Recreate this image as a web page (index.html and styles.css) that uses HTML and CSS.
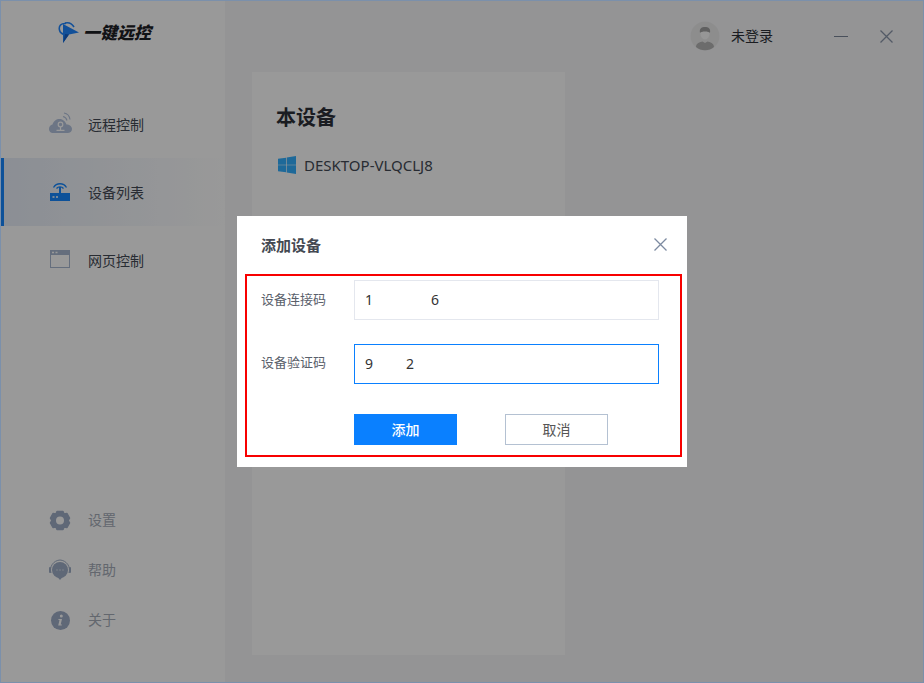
FILE: index.html
```html
<!DOCTYPE html>
<html lang="zh-CN">
<head>
  <meta charset="UTF-8" />
  <meta name="viewport" content="width=device-width, initial-scale=1.0"/>
  <title>一键远控</title>
  <link rel="stylesheet" href="styles.css">
</head>
<body>
  <div class="window">
    <aside class="sidebar">
      <div class="logo">
        <svg width="24" height="24" viewBox="0 0 24 24">
          <path d="M5 3 L21 11.500 L11 13.500 L5 22 Z" fill="#1f86ff"/>
          <path d="M11 13.500 L5 22 L7 13 Z" fill="#1560c8"/>
          <path d="M8 2.500 C3 2 0.500 5 1.500 9 C2 11.500 4 13 6.500 13.500" fill="none" stroke="#1f86ff" stroke-width="1.600"/>
          <path d="M7 2 C11 1 14 2.500 16 6" fill="none" stroke="#1f86ff" stroke-width="1.600"/>
        </svg>
        <span class="logo-text">一键远控</span>
      </div>

      <nav class="nav">
        <a class="nav-item">
          <svg class="nav-icon" width="24" height="24" viewBox="0 0 24 24">
            <path d="M5 21 C2 21 1 18.500 1 17 C1 14.500 2.500 13 4.500 12.500 C5.500 9 8.500 7 11.500 7 C15 7 17.500 9.500 18.500 12.500 C21.500 12.500 24 14.500 24 17 C24 19.500 22 21 19.500 21 Z" fill="#b4c3de"/>
            <circle cx="12.500" cy="12.500" r="2.300" fill="none" stroke="#fff" stroke-width="1.200"/>
            <path d="M12.500 15 V18 M8.500 18.300 H16.500" stroke="#fff" stroke-width="1.200"/>
            <path d="M15 4.500 C17 5 18.500 6.500 19 8.500 M16 1 C19.500 1.500 21.500 4 22 7.500" fill="none" stroke="#b4c3de" stroke-width="1.100"/>
          </svg>
          <span>远程控制</span>
        </a>
        <a class="nav-item active">
          <svg class="nav-icon" width="24" height="24" viewBox="0 0 24 24">
            <rect x="2" y="13" width="20" height="8" fill="#1688ff"/>
            <path d="M12 7 V13" stroke="#1688ff" stroke-width="2"/>
            <path d="M8.500 8.500 A4.500 4.500 0 0 1 15.500 8.500 M5.500 7.500 A7.500 7.500 0 0 1 18.500 7.500" fill="none" stroke="#1688ff" stroke-width="1.300"/>
            <path d="M4.500 17 H6.500 M8 17 H10" stroke="#fff" stroke-width="1.600"/>
          </svg>
          <span>设备列表</span>
        </a>
        <a class="nav-item">
          <svg class="nav-icon" width="24" height="24" viewBox="0 0 24 24">
            <rect x="2" y="2" width="20" height="18" fill="#a9b8d0"/>
            <rect x="3" y="7" width="18" height="12" fill="#fff"/>
            <path d="M4 4.500 H6 M7.500 4.500 H9.500" stroke="#fff" stroke-width="1.300"/>
          </svg>
          <span>网页控制</span>
        </a>
      </nav>

      <div class="sub-nav">
        <a class="sub-item">
          <svg class="nav-icon" width="24" height="24" viewBox="0 0 24 24">
            <path d="M9 3.500 H15 L16 6 L19 5.500 L21.500 10 L20 12.500 L21.500 15 L19 19.500 L16 19 L15 21.500 H9 L8 19 L5 19.500 L2.500 15 L4 12.500 L2.500 10 L5 5.500 L8 6 Z" fill="#9eadc6" stroke="#9eadc6" stroke-width="1.500" stroke-linejoin="round"/>
            <circle cx="12" cy="12.500" r="4" fill="#fff"/>
          </svg>
          <span>设置</span>
        </a>
        <a class="sub-item">
          <svg class="nav-icon" width="24" height="24" viewBox="0 0 24 24">
            <circle cx="12" cy="12" r="8" fill="#9eadc6"/>
            <path d="M9.500 19 L12 22 L14.500 19 Z" fill="#9eadc6"/>
            <path d="M3 15 A10 10 0 0 1 12 2 A10 10 0 0 1 21 15" fill="none" stroke="#9eadc6" stroke-width="1"/>
            <rect x="1" y="9" width="2" height="6" rx="1" fill="#9eadc6"/>
            <rect x="21" y="9" width="2" height="6" rx="1" fill="#9eadc6"/>
            <path d="M8.500 12 H9.500 M11.500 12 H12.500 M14.500 12 H15.500" stroke="#fff" stroke-width="1.200"/>
          </svg>
          <span>帮助</span>
        </a>
        <a class="sub-item">
          <svg class="nav-icon" width="24" height="24" viewBox="0 0 24 24">
            <circle cx="12.500" cy="12.500" r="9.500" fill="#9eadc6"/>
            <circle cx="13.300" cy="8" r="1.500" fill="#fff"/>
            <path d="M10.500 11 H14 L12.700 16.500 H14 L13.700 17.500 H10.200 L11.500 12 H10.300 Z" fill="#fff"/>
          </svg>
          <span>关于</span>
        </a>
      </div>
    </aside>

    <main class="main">
      <section class="device-card">
        <h2>本设备</h2>
        <div class="device-name">
          <svg width="18" height="18" viewBox="0 0 19 19">
            <path d="M0 3 L8.500 1.800 V9.200 H0 Z M9.200 1.600 L19 0 V9.200 H9.200 Z M0 9.800 H8.500 V17.200 L0 16 Z M9.200 9.800 H19 V19 L9.200 17.400 Z" fill="#33b0ff"/>
          </svg>
          <span>DESKTOP-VLQCLJ8</span>
        </div>
      </section>
    </main>

    <header class="topbar">
      <svg class="avatar" width="30" height="30" viewBox="0 0 30 30">
        <circle cx="15" cy="15" r="14.500" fill="#ececec"/>
        <ellipse cx="15" cy="12.500" rx="4.500" ry="6" fill="#fafafa"/>
        <path d="M10 12 C9 7 12 6 15 6 C18 6 21 7 20 12 C19 10 11 10 10 12 Z" fill="#a0a0a0"/>
        <path d="M6 26 C6 22 10 21 12.500 20.500 L15 22 L17.500 20.500 C20 21 24 22 24 26 A14 14 0 0 1 6 26 Z" fill="#b4b4b4"/>
      </svg>
      <span class="user-name">未登录</span>
      <span class="win-min"></span>
      <svg class="win-close" width="13" height="13" viewBox="0 0 13 13">
        <path d="M0.500 0.500 L12.500 12.500 M12.500 0.500 L0.500 12.500" stroke="#8a97aa" stroke-width="1.300"/>
      </svg>
    </header>

    <div class="overlay">
      <div class="dialog">
        <div class="dialog-head">
          <h3>添加设备</h3>
          <svg width="13" height="13" viewBox="0 0 13 13">
            <path d="M0.500 0.500 L12.500 12.500 M12.500 0.500 L0.500 12.500" stroke="#7c8aa0" stroke-width="1.300"/>
          </svg>
        </div>
        <div class="dialog-form">
          <div class="form-row">
            <label class="label-a">设备连接码</label>
            <div class="field code-a"><span>1</span><span>6</span></div>
          </div>
          <div class="form-row">
            <label class="label-b">设备验证码</label>
            <div class="field code-b focus"><span>9</span><span>2</span></div>
          </div>
          <div class="form-actions">
            <button class="btn-primary">添加</button>
            <button class="btn-plain">取消</button>
          </div>
        </div>
      </div>
    </div>
  </div>
</body>
</html>
```

FILE: styles.css
```css
* {
  box-sizing: border-box;
}
html, body {
  margin: 0;
  height: 100%;
  overflow: hidden;
}
body {
  font-family: "Noto Sans", "Noto Sans CJK SC", sans-serif;
  color: #2c3038;
}
.window {
  display: flex;
  height: 683px;
  border: 1px solid #7b90ab;
  background: #fff;
  position: relative;
}

/* sidebar */
.sidebar {
  width: 224px;
  display: flex;
  flex-direction: column;
  background: #fff;
}
.logo {
  height: 89px;
  padding: 20px 0 0 57px;
  display: flex;
  align-items: flex-start;
  gap: 1px;
}
.logo-text {
  font-size: 17px;
  line-height: 24px;
  font-weight: 900;
  font-style: italic;
  color: #1c2026;
}
.nav-item {
  height: 68px;
  padding-left: 44px;
  display: flex;
  align-items: center;
  gap: 16px;
  font-size: 14px;
  color: #444a55;
  border-left: 3px solid transparent;
}
.sub-item span {
  padding-bottom: 2px;
}
.nav-item.active {
  border-left-color: #1688ff;
  background: linear-gradient(90deg, #e8eef8, #fff);
}
.nav-icon {
  flex: none;
}
.sub-nav {
  margin-top: auto;
  margin-bottom: 37px;
}
.sub-item {
  height: 50px;
  padding-left: 44px;
  display: flex;
  align-items: center;
  gap: 16px;
  font-size: 14px;
  color: #a5acb8;
  border-left: 3px solid transparent;
}

/* main */
.main {
  flex: 1;
  background: #f7f7f9;
  padding: 71px 0 27px 27px;
}
.device-card {
  width: 313px;
  height: 583px;
  background: #fff;
  padding: 31px 24px;
}
.device-card h2 {
  margin: 0;
  font-size: 20px;
  line-height: 30px;
  font-weight: 700;
}
.device-name {
  margin: 22px 0 0 2px;
  display: flex;
  align-items: center;
  gap: 8px;
  font-size: 15px;
  color: #444a55;
}

/* top right */
.topbar {
  position: absolute;
  top: 20px;
  right: 30px;
  display: flex;
  align-items: center;
}
.user-name {
  margin-left: 11px;
  padding-bottom: 2px;
  font-size: 14px;
}
.win-min {
  margin-left: 61px;
  width: 14px;
  height: 1px;
  background: #7a8698;
}
.win-close {
  margin-left: 32px;
}

/* dialog */
.overlay {
  position: absolute;
  top: 0;
  left: 0;
  right: 0;
  bottom: 0;
  background: rgba(0, 0, 0, 0.4);
}
.dialog {
  position: absolute;
  left: 236px;
  top: 215px;
  width: 450px;
  height: 251px;
  background: #fff;
}
.dialog-head {
  height: 58px;
  padding: 0 20px 2px 24px;
  display: flex;
  align-items: center;
  justify-content: space-between;
}
.dialog-head h3 {
  margin: 0;
  font-size: 15px;
  font-weight: 700;
  color: #444952;
}
.dialog-form {
  margin: 0 5px 0 8px;
  height: 183px;
  border: 2px solid #f80000;
  padding: 4px 21px 0 14px;
}
.form-row {
  display: flex;
  align-items: center;
  height: 40px;
  margin-bottom: 24px;
}
.form-row label {
  width: 93px;
  font-size: 13px;
  color: #5a606b;
}
.label-a {
  margin-bottom: 4px;
}
.label-b {
  margin-bottom: 6px;
}
.field {
  width: 305px;
  height: 40px;
  padding: 0 10px 2px;
  display: flex;
  align-items: center;
  border: 1px solid #e4e7ee;
  font-size: 14px;
  color: #333;
}
.field.focus {
  border-color: #0a80ff;
}
.code-a {
  gap: 58px;
}
.code-b {
  gap: 33px;
}
.form-actions {
  padding: 6px 0 0 93px;
  display: flex;
  gap: 48px;
}
.form-actions button {
  width: 103px;
  height: 31px;
  padding: 0 0 2px;
  font-family: inherit;
  font-size: 14px;
  cursor: pointer;
}
.btn-primary {
  border: none;
  background: #0a80ff;
  color: #fff;
  font-weight: 500;
  padding-right: 2px;
}
.btn-plain {
  border: 1px solid #b4c1d2;
  background: #fff;
  color: #555;
}
```
